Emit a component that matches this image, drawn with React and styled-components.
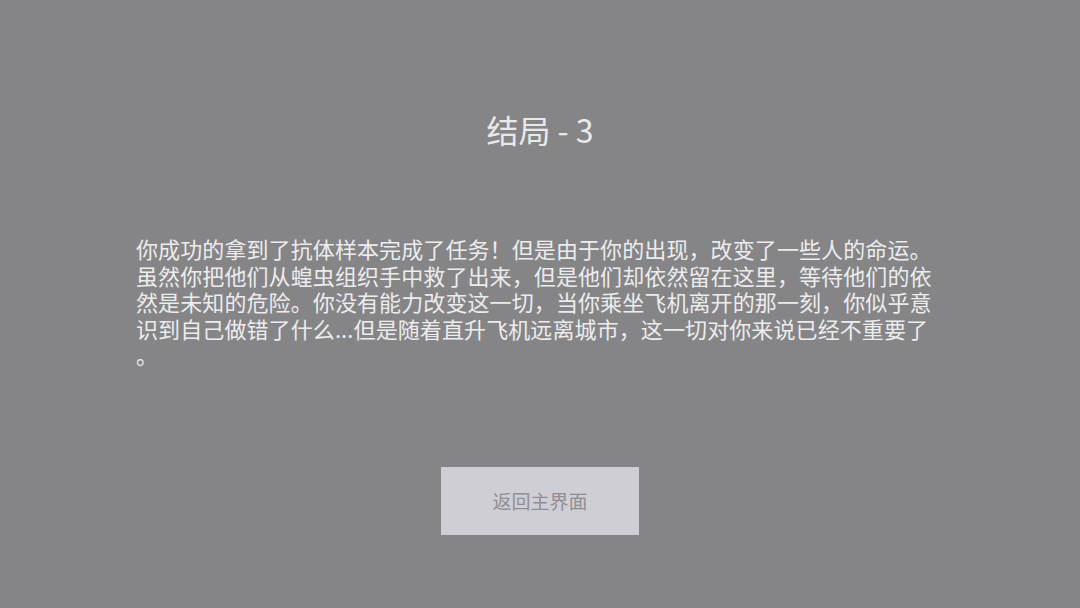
import React from 'react';
import styled, { createGlobalStyle } from 'styled-components';

const GlobalStyle = createGlobalStyle`
  html, body {
    margin: 0;
    padding: 0;
    background: #858587;
  }
  body {
    font-family: "Noto Sans CJK SC", "Noto Sans", sans-serif;
  }
`;

const Screen = styled.div`
  width: 1080px;
  height: 608px;
  display: flex;
  flex-direction: column;
  align-items: center;
  padding-top: 113px;
  box-sizing: border-box;
  background: #858587;
  overflow: hidden;
`;

const Title = styled.h1`
  margin: 0;
  font-size: 32px;
  font-weight: 400;
  line-height: 32px;
  color: #e9e9ea;
`;

const Story = styled.div`
  align-self: stretch;
  margin-top: 90px;
  padding: 0 136px;
  color: #ececed;
  font-size: 22px;
  line-height: 26.5px;
  letter-spacing: 0.1px;
`;

const Line = styled.div`
  white-space: nowrap;
`;

const BackButton = styled.button`
  margin-top: 99px;
  width: 198px;
  height: 68px;
  border: none;
  border-radius: 0;
  background: #cfced4;
  color: #8f8e94;
  font-family: inherit;
  font-size: 19px;
  cursor: pointer;
`;

const lines = [
  '你成功的拿到了抗体样本完成了任务！但是由于你的出现，改变了一些人的命运。',
  '虽然你把他们从蝗虫组织手中救了出来，但是他们却依然留在这里，等待他们的依',
  '然是未知的危险。你没有能力改变这一切，当你乘坐飞机离开的那一刻，你似乎意',
  '识到自己做错了什么...但是随着直升飞机远离城市，这一切对你来说已经不重要了',
  '。',
];

export default function App() {
  return (
    <Screen>
      <GlobalStyle />
      <Title>结局 - 3</Title>
      <Story>
        {lines.map((text, i) => (
          <Line key={i}>{text}</Line>
        ))}
      </Story>
      <BackButton>返回主界面</BackButton>
    </Screen>
  );
}
